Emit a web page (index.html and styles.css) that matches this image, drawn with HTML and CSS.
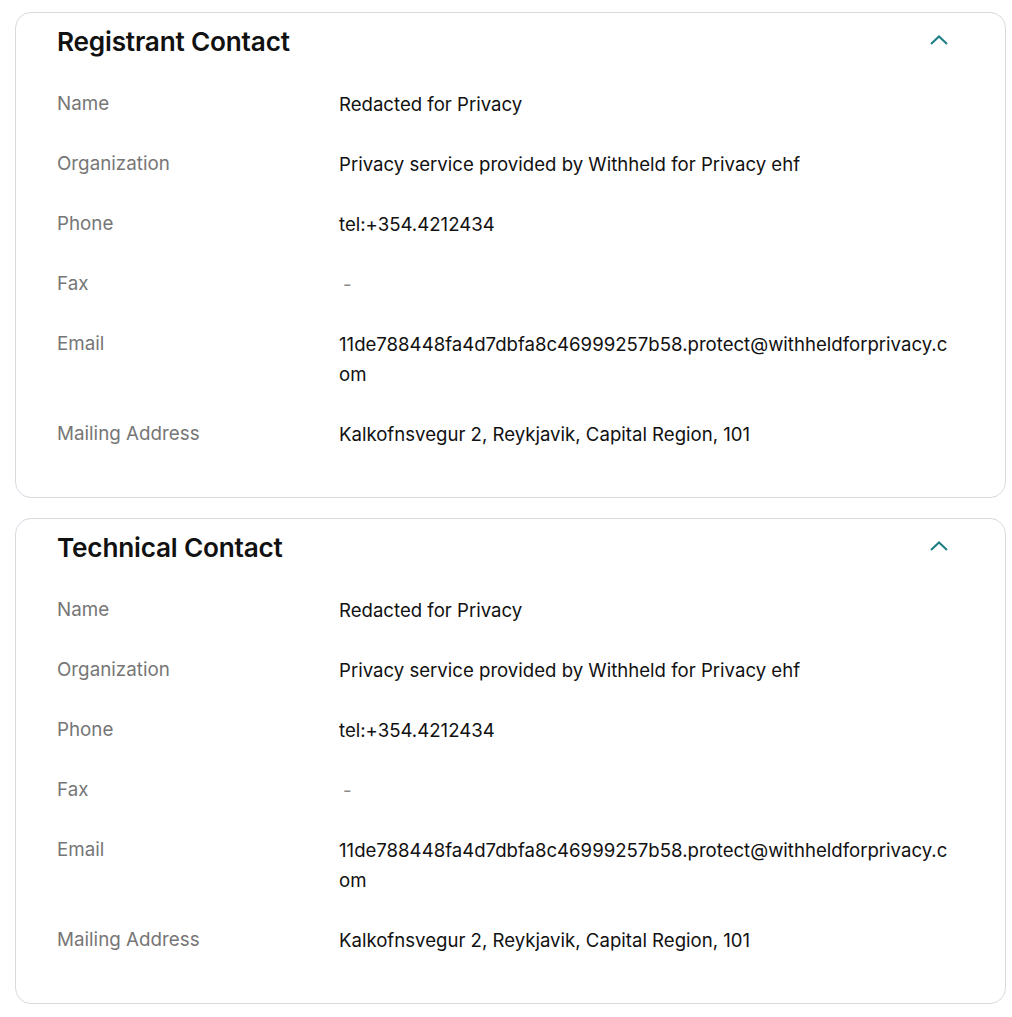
FILE: index.html
```html
<!DOCTYPE html>
<html>
<head>
<meta charset="utf-8">
<link rel="stylesheet" href="styles.css">
</head>
<body>
<div class="page">
  <section class="card">
    <div class="card-head">
      <h2 class="card-title">Registrant Contact</h2>
      <svg class="chev" width="18" height="10" viewBox="0 0 18 10"><path d="M1 9 L9 1.4 L17 9" fill="none" stroke="#1d7f84" stroke-width="2"/></svg>
    </div>
    <dl class="rows">
      <div class="row"><dt>Name</dt><dd>Redacted for Privacy</dd></div>
      <div class="row"><dt>Organization</dt><dd>Privacy service provided by Withheld for Privacy ehf</dd></div>
      <div class="row"><dt>Phone</dt><dd>tel:+354.4212434</dd></div>
      <div class="row"><dt>Fax</dt><dd class="empty">-</dd></div>
      <div class="row"><dt>Email</dt><dd class="wrap">11de788448fa4d7dbfa8c46999257b58.protect@withheldforprivacy.com</dd></div>
      <div class="row"><dt>Mailing Address</dt><dd>Kalkofnsvegur 2, Reykjavik, Capital Region, 101</dd></div>
    </dl>
  </section>
  <section class="card">
    <div class="card-head">
      <h2 class="card-title">Technical Contact</h2>
      <svg class="chev" width="18" height="10" viewBox="0 0 18 10"><path d="M1 9 L9 1.4 L17 9" fill="none" stroke="#1d7f84" stroke-width="2"/></svg>
    </div>
    <dl class="rows">
      <div class="row"><dt>Name</dt><dd>Redacted for Privacy</dd></div>
      <div class="row"><dt>Organization</dt><dd>Privacy service provided by Withheld for Privacy ehf</dd></div>
      <div class="row"><dt>Phone</dt><dd>tel:+354.4212434</dd></div>
      <div class="row"><dt>Fax</dt><dd class="empty">-</dd></div>
      <div class="row"><dt>Email</dt><dd class="wrap">11de788448fa4d7dbfa8c46999257b58.protect@withheldforprivacy.com</dd></div>
      <div class="row"><dt>Mailing Address</dt><dd>Kalkofnsvegur 2, Reykjavik, Capital Region, 101</dd></div>
    </dl>
  </section>
</div>
</body>
</html>
```
FILE: styles.css
```css
* { box-sizing: border-box; }
html, body { margin: 0; padding: 0; background: #fff; }
body { font-family: Inter, "Noto Sans", sans-serif; color: #111; }
.page {
  padding: 12px 0 0 15px;
  display: flex;
  flex-direction: column;
  gap: 20px;
}
.card {
  width: 991px;
  border: 1px solid #d6dbe0;
  border-radius: 16px;
  padding: 11px 47px 33px 41px;
}
.card-head {
  display: flex;
  align-items: center;
  justify-content: space-between;
  height: 36px;
}
.card-title {
  margin: 0;
  font-size: 26.2px;
  font-weight: 600;
  line-height: 36px;
  color: #111;
  letter-spacing: -0.2px;
}
.chev { margin-right: 10px; margin-top: -4px; }
.rows { margin: 14px 0 0 0; }
.row {
  display: grid;
  grid-template-columns: 282px 612px;
  padding: 15px 0;
  font-size: 18.6px;
  line-height: 30px;
}
.row dt { color: #767676; font-size: 18.8px; }
.row dd { margin: 0; color: #111; }
.row dd.empty { color: #8a8a8a; padding-left: 4px; }
.row dd.wrap { word-break: break-all; }
```
